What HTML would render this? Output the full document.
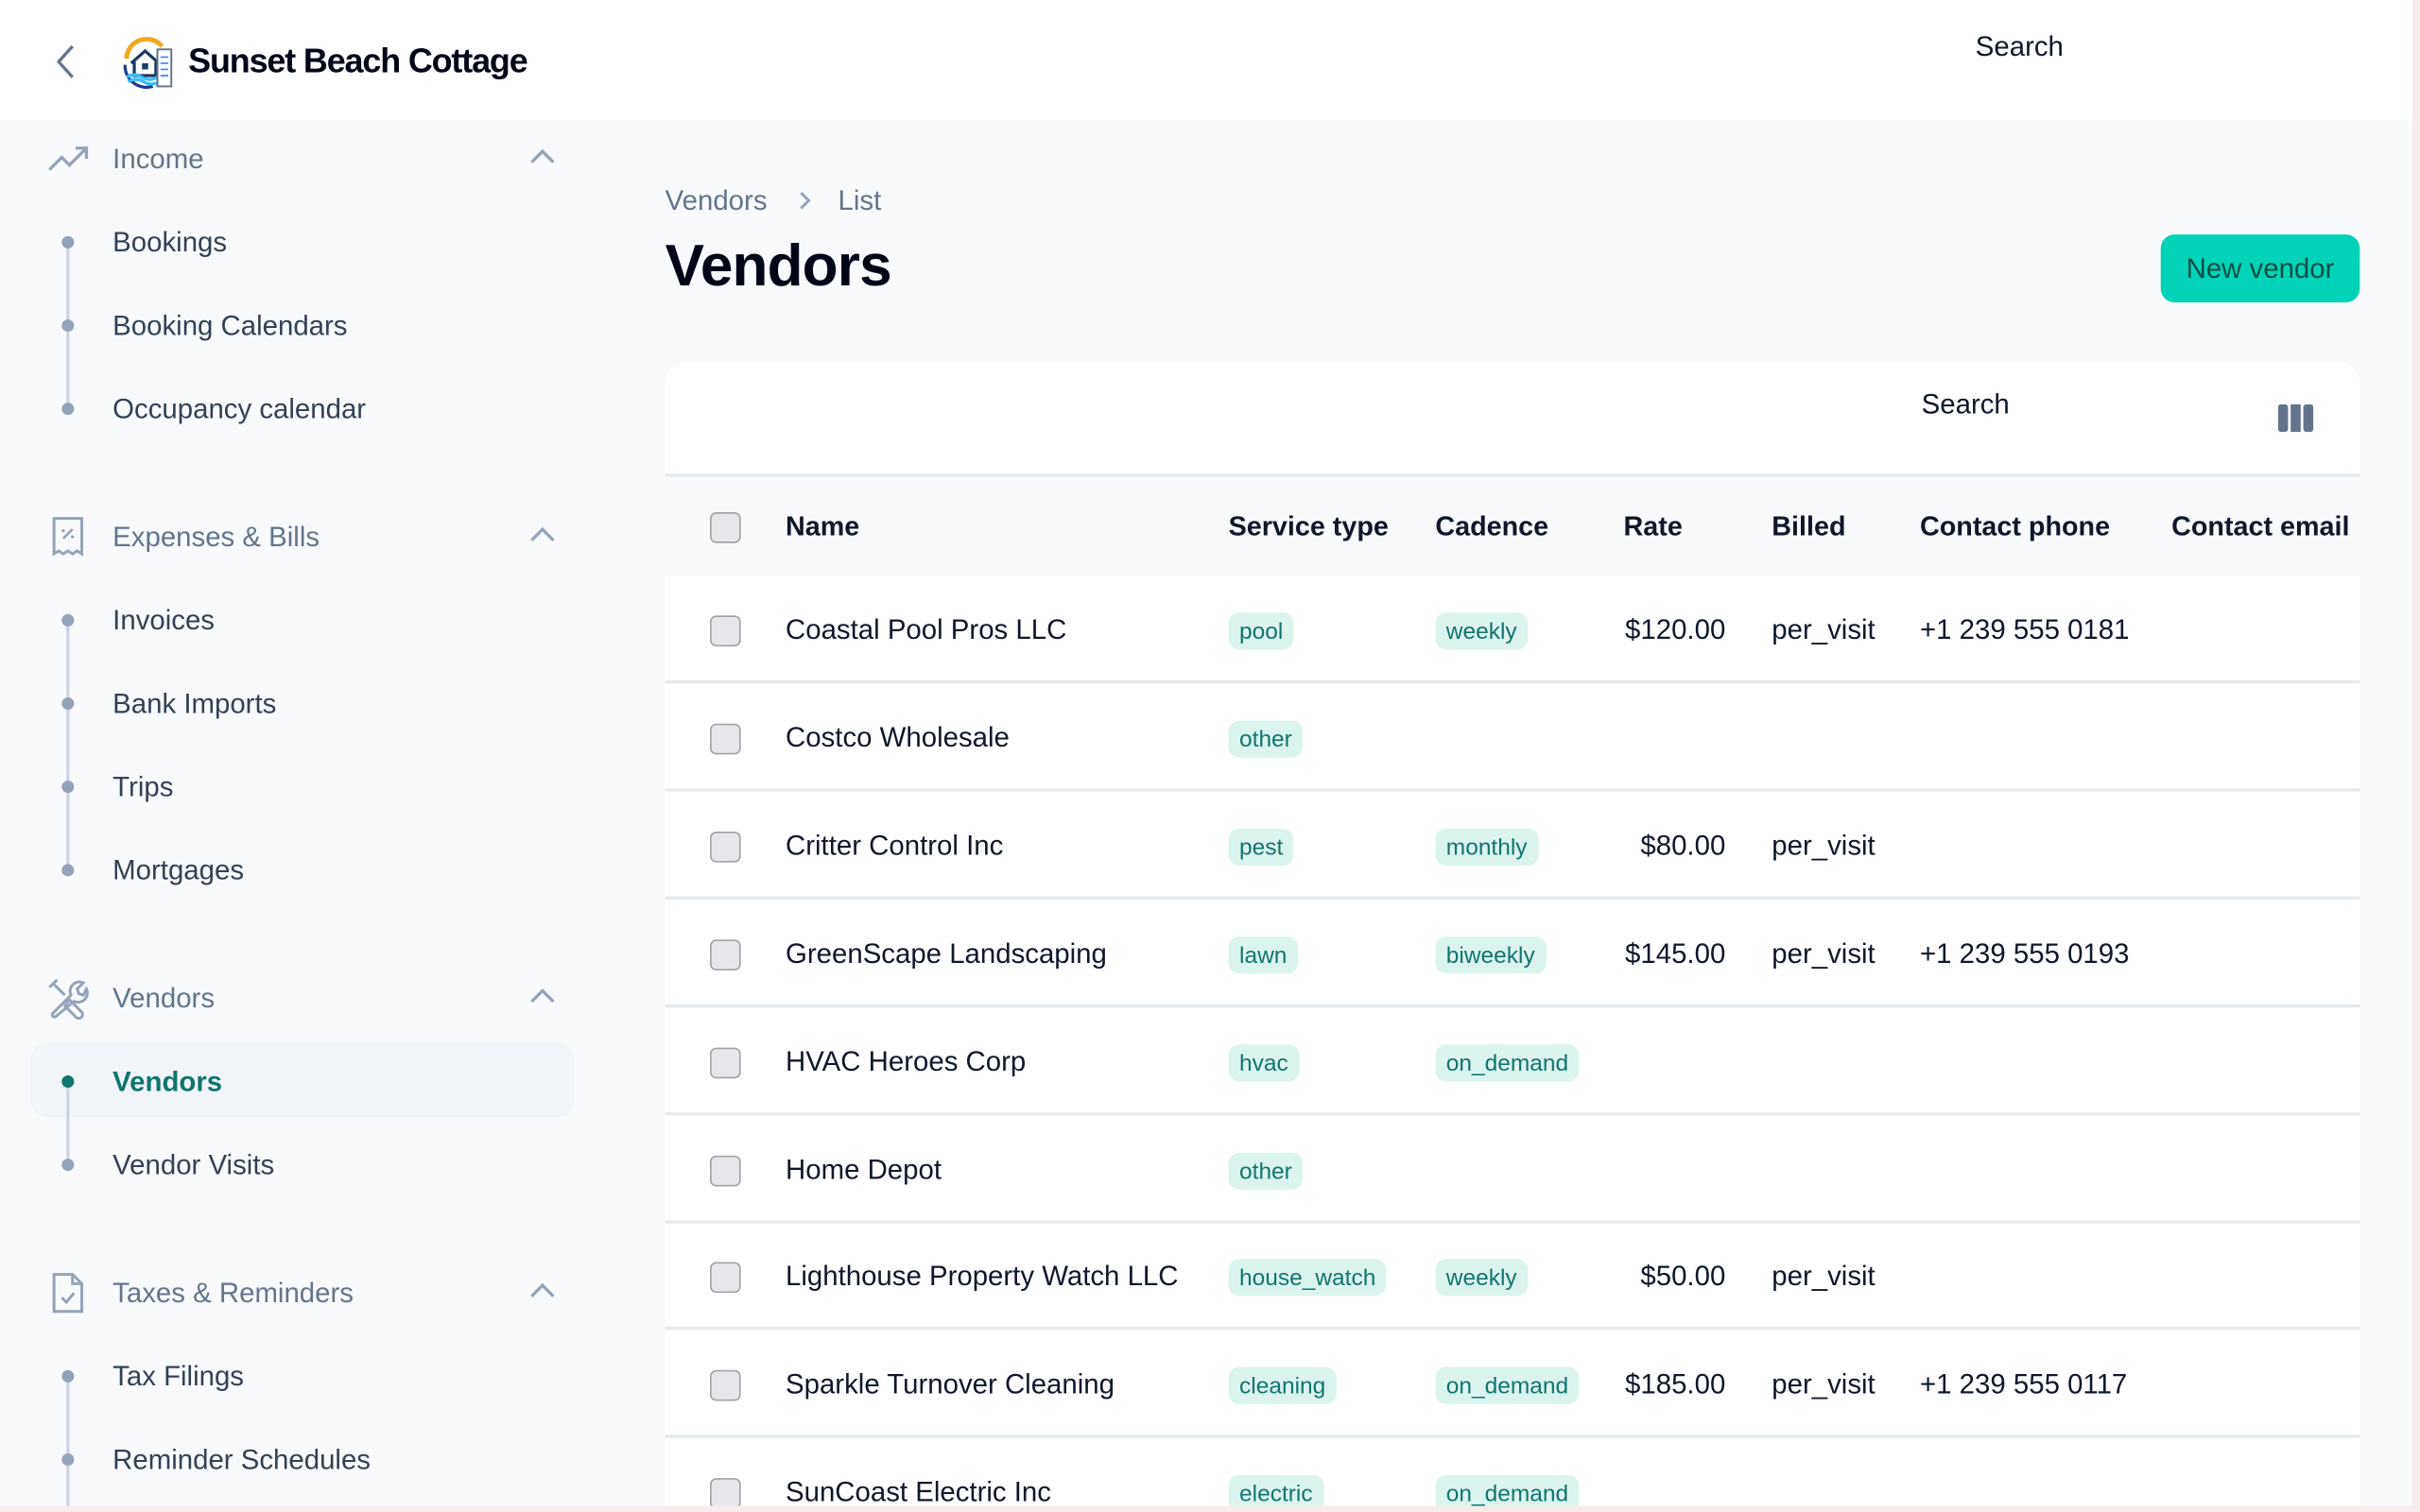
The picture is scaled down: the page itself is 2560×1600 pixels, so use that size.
<!DOCTYPE html>
<html><head><meta charset="utf-8">
<style>
html,body{margin:0;padding:0;width:2560px;height:1600px;overflow:hidden;background:#f8fafc;}
#w{position:absolute;left:0;top:0;width:1568px;height:980px;transform:scale(1.63265);transform-origin:0 0;font-family:"Liberation Sans",sans-serif;background:#f8fafc;overflow:hidden;}
.a{position:absolute;white-space:nowrap;}
.top{position:absolute;left:0;top:0;width:1568px;height:78px;background:#fff;}
.grp{font-size:18px;color:#64748b;}
.it{font-size:18px;color:#334155;}
.dot{position:absolute;width:8px;height:8px;border-radius:50%;background:#94a3b8;}
.vl{position:absolute;width:2px;background:#cbd5e1;}
.chev{position:absolute;width:9px;height:9px;border-left:2px solid #94a3b8;border-top:2px solid #94a3b8;transform:rotate(45deg);}
.th{font-size:17.6px;font-weight:bold;color:#0f172a;}
.td{font-size:18px;color:#0f172a;}
.cb{position:absolute;left:460px;width:18px;height:18px;border:1px solid #a3a3a3;border-radius:4px;background:#e5e7eb;}
.bd{position:absolute;height:24px;line-height:25px;padding:0 7px;border-radius:7px;background:#dbf4ee;color:#0f766e;font-size:15px;white-space:nowrap;}
.hr{position:absolute;left:431px;width:1098px;height:2px;background:#e5e9ee;}
</style></head><body><div id="w">
<div class="top"></div>
<svg class="a" style="left:34px;top:28px" width="16" height="24" viewBox="0 0 16 24"><path d="M13 2 L4 12 L13 22" fill="none" stroke="#64748b" stroke-width="2"/></svg>
<svg class="a" style="left:77px;top:24px" width="36" height="34" viewBox="0 0 36 34">
<path d="M5 14 A13 13 0 0 1 28 6" fill="none" stroke="#f2a81d" stroke-width="3"/>
<path d="M4 18 A14 14 0 0 0 22 32" fill="none" stroke="#1e3a8a" stroke-width="2"/>
<path d="M8 17 L17 9 L26 17 M10 16 V25 H24 V16" fill="none" stroke="#1e3a5f" stroke-width="2"/>
<rect x="15" y="17" width="4" height="4" fill="#1e3a5f"/>
<path d="M5 26 Q10 23 15 26 T25 26 M6 29 Q11 26 16 29 T26 29" fill="none" stroke="#38bdf8" stroke-width="2"/>
<rect x="25" y="8" width="9" height="24" fill="#fff" stroke="#64748b" stroke-width="1.2"/>
<path d="M27 13h5M27 17h5M27 21h5M27 25h5" stroke="#3b82f6" stroke-width="1"/>
</svg>
<div class="a" style="left:122px;top:27px;font-size:22px;font-weight:bold;color:#020617;letter-spacing:-0.7px">Sunset Beach Cottage</div>
<div class="a" style="left:1280px;top:20px;font-size:18px;color:#0f172a">Search</div>
<div class="a" style="left:1563px;top:0;width:5px;height:980px;background:#f3eceb"></div>

<svg class="a" style="left:30px;top:93px" width="28" height="20" viewBox="0 0 28 20"><path d="M2 17 L10 9 L15 14 L25 4 M19 3 H26 V10" fill="none" stroke="#94a3b8" stroke-width="2"/></svg>
<div class="a grp" style="left:73px;top:93px">Income</div>
<div class="chev" style="left:346px;top:99px"></div>
<div class="vl" style="left:43px;top:157px;height:108px"></div>
<div class="dot" style="left:40px;top:153px"></div><div class="a it" style="left:73px;top:147px">Bookings</div>
<div class="dot" style="left:40px;top:207px"></div><div class="a it" style="left:73px;top:201px">Booking Calendars</div>
<div class="dot" style="left:40px;top:261px"></div><div class="a it" style="left:73px;top:255px">Occupancy calendar</div>

<svg class="a" style="left:32px;top:334px" width="24" height="28" viewBox="0 0 24 28"><path d="M3 2 H21 V25 L18 23 L15 25 L12 23 L9 25 L6 23 L3 25 Z" fill="none" stroke="#94a3b8" stroke-width="1.8"/><path d="M9 15 L15 9" stroke="#94a3b8" stroke-width="1.6"/><circle cx="9" cy="10" r="1" fill="#94a3b8"/><circle cx="15" cy="14" r="1" fill="#94a3b8"/></svg>
<div class="a grp" style="left:73px;top:338px">Expenses &amp; Bills</div>
<div class="chev" style="left:346px;top:344px"></div>
<div class="vl" style="left:43px;top:402px;height:162px"></div>
<div class="dot" style="left:40px;top:398px"></div><div class="a it" style="left:73px;top:392px">Invoices</div>
<div class="dot" style="left:40px;top:452px"></div><div class="a it" style="left:73px;top:446px">Bank Imports</div>
<div class="dot" style="left:40px;top:506px"></div><div class="a it" style="left:73px;top:500px">Trips</div>
<div class="dot" style="left:40px;top:560px"></div><div class="a it" style="left:73px;top:554px">Mortgages</div>

<svg class="a" style="left:30px;top:633px" width="28" height="28" viewBox="0 0 28 28"><path d="M4 4 L12 12 M2 7 L7 2 M15 15 L23 23 a2.5 2.5 0 0 1 -3.5 3.5 L12 19 Z" fill="none" stroke="#94a3b8" stroke-width="1.8"/><path d="M4 24 L16 12 a6 6 0 0 1 8 -8 L20 8 L21 11 L24 12 L26 8 a6 6 0 0 1 -8 8 L6 26 a1.5 1.5 0 0 1 -2 -2 Z" fill="none" stroke="#94a3b8" stroke-width="1.8"/></svg>
<div class="a grp" style="left:73px;top:637px">Vendors</div>
<div class="chev" style="left:346px;top:643px"></div>
<div class="a" style="left:20px;top:676px;width:352px;height:48px;background:#f1f5f9;border-radius:10px"></div>
<div class="vl" style="left:43px;top:701px;height:54px"></div>
<div class="dot" style="left:40px;top:697px;background:#0f766e"></div><div class="a it" style="left:73px;top:691px;color:#0f766e;font-weight:bold">Vendors</div>
<div class="dot" style="left:40px;top:751px"></div><div class="a it" style="left:73px;top:745px">Vendor Visits</div>

<svg class="a" style="left:33px;top:824px" width="22" height="28" viewBox="0 0 22 28"><path d="M2 2 H14 L20 8 V26 H2 Z M14 2 V8 H20" fill="none" stroke="#94a3b8" stroke-width="1.8"/><path d="M7 17 L10 20 L15 14" fill="none" stroke="#94a3b8" stroke-width="1.8"/></svg>
<div class="a grp" style="left:73px;top:828px">Taxes &amp; Reminders</div>
<div class="chev" style="left:346px;top:834px"></div>
<div class="vl" style="left:43px;top:892px;height:88px"></div>
<div class="dot" style="left:40px;top:888px"></div><div class="a it" style="left:73px;top:882px">Tax Filings</div>
<div class="dot" style="left:40px;top:942px"></div><div class="a it" style="left:73px;top:936px">Reminder Schedules</div>

<div class="a" style="left:431px;top:120px;font-size:18px;color:#64748b">Vendors</div>
<svg class="a" style="left:516px;top:123px" width="12" height="14" viewBox="0 0 12 14"><path d="M3 2 L8 7 L3 12" fill="none" stroke="#94a3b8" stroke-width="1.8"/></svg>
<div class="a" style="left:543px;top:120px;font-size:18px;color:#64748b">List</div>
<div class="a" style="left:431px;top:152px;font-size:38px;font-weight:bold;color:#020617;letter-spacing:-0.5px">Vendors</div>
<div class="a" style="left:1400px;top:152px;width:129px;height:44px;border-radius:9px;background:#00d3b9;color:#064e45;font-size:18px;line-height:44px;text-align:center">New vendor</div>

<div class="a" style="left:431px;top:235px;width:1098px;height:760px;background:#fff;border-radius:14px 14px 0 0"></div>
<div class="a" style="left:1245px;top:252px;font-size:18px;color:#0f172a">Search</div>
<svg class="a" style="left:1476px;top:262px" width="23" height="18" viewBox="0 0 23 18"><rect x="0" y="0" width="6.5" height="18" rx="2" fill="#64748b"/><rect x="8.2" y="0" width="6.5" height="18" fill="#64748b"/><rect x="16.4" y="0" width="6.5" height="18" rx="2" fill="#64748b"/></svg>
<div class="hr" style="top:307px"></div>
<div class="a" style="left:431px;top:309px;width:1098px;height:64px;background:#f8fafc"></div>
<div class="cb" style="top:332px"></div>
<div class="a th" style="left:509px;top:331px">Name</div>
<div class="a th" style="left:796px;top:331px">Service type</div>
<div class="a th" style="left:930px;top:331px">Cadence</div>
<div class="a th" style="left:1052px;top:331px">Rate</div>
<div class="a th" style="left:1148px;top:331px">Billed</div>
<div class="a th" style="left:1244px;top:331px">Contact phone</div>
<div class="a th" style="left:1407px;top:331px">Contact email</div>

<div class="cb" style="top:399px"></div><div class="a td" style="left:509px;top:398px">Coastal Pool Pros LLC</div><div class="bd" style="left:796px;top:397px">pool</div><div class="bd" style="left:930px;top:397px">weekly</div><div class="a td" style="left:1018px;width:100px;text-align:right;top:398px">$120.00</div><div class="a td" style="left:1148px;top:398px">per_visit</div><div class="a td" style="left:1244px;top:398px">+1 239 555 0181</div>
<div class="hr" style="top:441px"></div>
<div class="cb" style="top:469px"></div><div class="a td" style="left:509px;top:468px">Costco Wholesale</div><div class="bd" style="left:796px;top:467px">other</div>
<div class="hr" style="top:511px"></div>
<div class="cb" style="top:539px"></div><div class="a td" style="left:509px;top:538px">Critter Control Inc</div><div class="bd" style="left:796px;top:537px">pest</div><div class="bd" style="left:930px;top:537px">monthly</div><div class="a td" style="left:1018px;width:100px;text-align:right;top:538px">$80.00</div><div class="a td" style="left:1148px;top:538px">per_visit</div>
<div class="hr" style="top:581px"></div>
<div class="cb" style="top:609px"></div><div class="a td" style="left:509px;top:608px">GreenScape Landscaping</div><div class="bd" style="left:796px;top:607px">lawn</div><div class="bd" style="left:930px;top:607px">biweekly</div><div class="a td" style="left:1018px;width:100px;text-align:right;top:608px">$145.00</div><div class="a td" style="left:1148px;top:608px">per_visit</div><div class="a td" style="left:1244px;top:608px">+1 239 555 0193</div>
<div class="hr" style="top:651px"></div>
<div class="cb" style="top:679px"></div><div class="a td" style="left:509px;top:678px">HVAC Heroes Corp</div><div class="bd" style="left:796px;top:677px">hvac</div><div class="bd" style="left:930px;top:677px">on_demand</div>
<div class="hr" style="top:721px"></div>
<div class="cb" style="top:749px"></div><div class="a td" style="left:509px;top:748px">Home Depot</div><div class="bd" style="left:796px;top:747px">other</div>
<div class="hr" style="top:791px"></div>
<div class="cb" style="top:818px"></div><div class="a td" style="left:509px;top:817px">Lighthouse Property Watch LLC</div><div class="bd" style="left:796px;top:816px">house_watch</div><div class="bd" style="left:930px;top:816px">weekly</div><div class="a td" style="left:1018px;width:100px;text-align:right;top:817px">$50.00</div><div class="a td" style="left:1148px;top:817px">per_visit</div>
<div class="hr" style="top:860px"></div>
<div class="cb" style="top:888px"></div><div class="a td" style="left:509px;top:887px">Sparkle Turnover Cleaning</div><div class="bd" style="left:796px;top:886px">cleaning</div><div class="bd" style="left:930px;top:886px">on_demand</div><div class="a td" style="left:1018px;width:100px;text-align:right;top:887px">$185.00</div><div class="a td" style="left:1148px;top:887px">per_visit</div><div class="a td" style="left:1244px;top:887px">+1 239 555 0117</div>
<div class="hr" style="top:930px"></div>
<div class="cb" style="top:958px"></div><div class="a td" style="left:509px;top:957px">SunCoast Electric Inc</div><div class="bd" style="left:796px;top:956px">electric</div><div class="bd" style="left:930px;top:956px">on_demand</div>
<div class="a" style="left:0;top:976px;width:1568px;height:4px;background:#f6ece9"></div>
</div></body></html>
